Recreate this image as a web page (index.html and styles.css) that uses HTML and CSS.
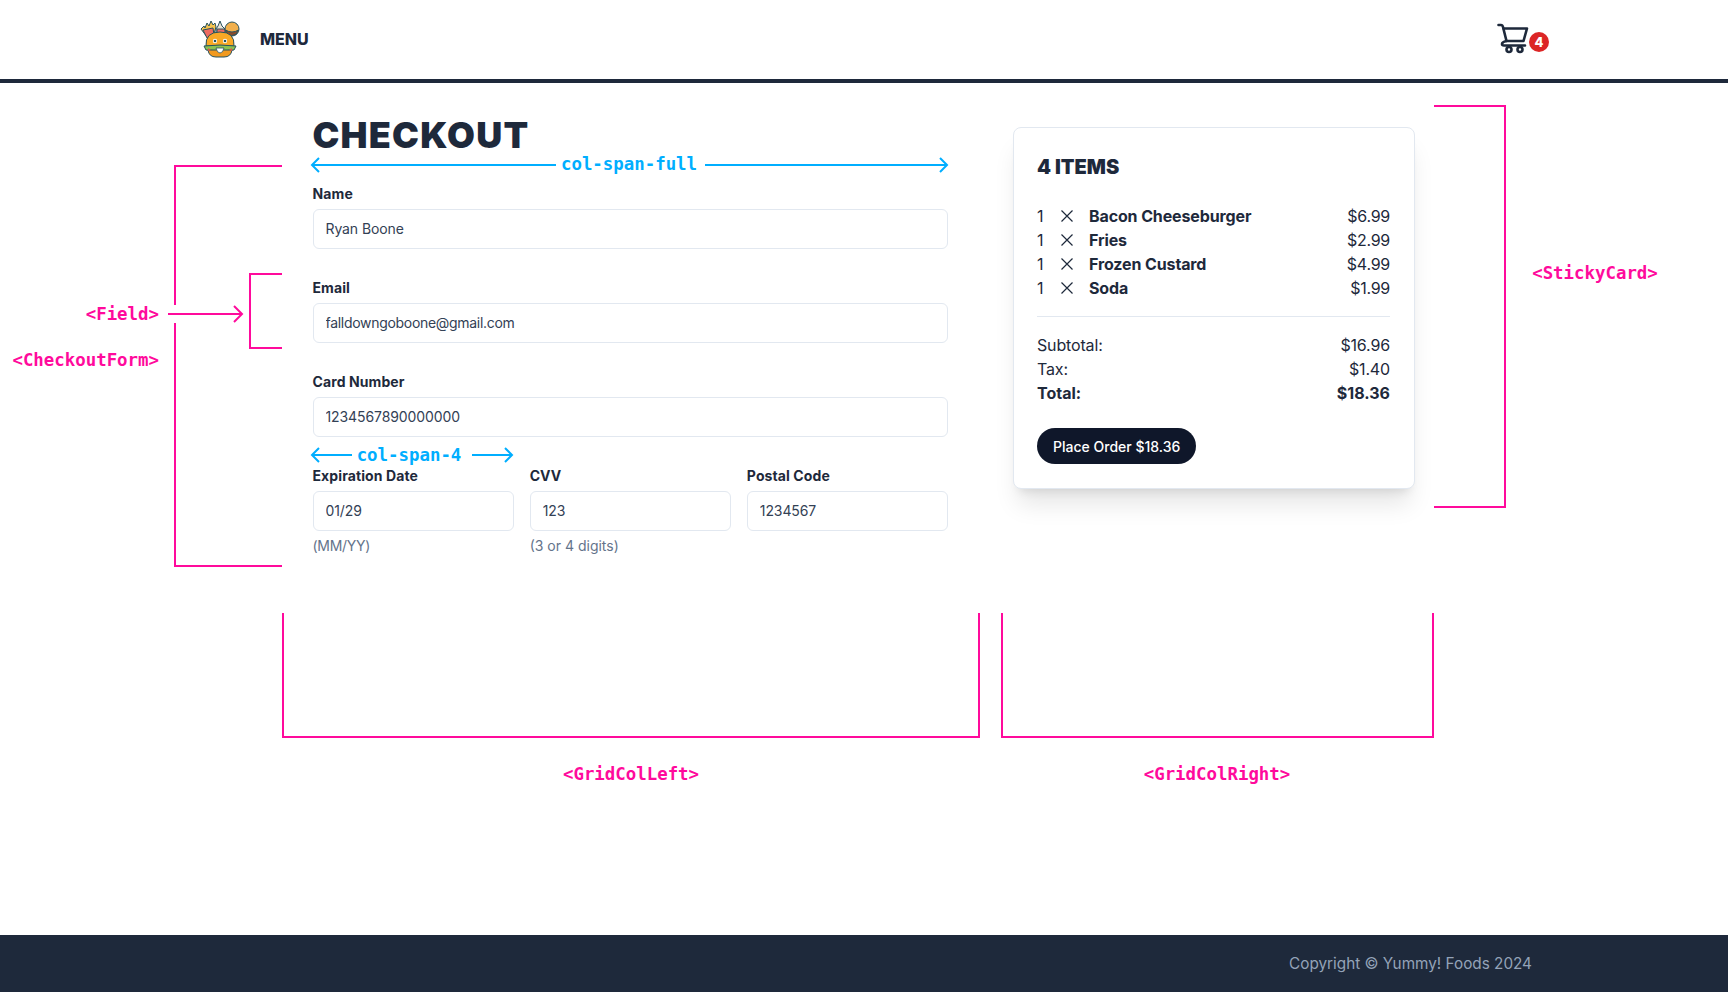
FILE: index.html
```html
<!DOCTYPE html>
<html>
    <head>
        <meta charset="utf-8">
        <title>Checkout</title>
        <link rel="stylesheet" href="styles.css">
    </head>
    <body>
        <header class="top">
            <div class="top-left">
                <svg class="logo" width="42" height="40" viewBox="0 0 42 40">
                    <g stroke="#27525e" stroke-width="1">
                        <path d="M2 10 L5 7 L6 9 L8 4 L10 7 L12 2 L14 6 L16 4 L17 8 L14 18 L8 18 Z" fill="#f6c34f"/>
                        <path d="M4 11 L14 9 L15 16 L8 19 Z" fill="#ef6b62"/>
                        <path d="M17 10 L19 7 L21 2 L23 7 L26 10 L26 16 L17 16 Z" fill="#ece4d6"/>
                        <path d="M18 10 H26 V16 H18 Z" fill="#ef6b62"/>
                        <circle cx="33" cy="10" r="7" fill="#f2b04c"/>
                        <path d="M26.500 11 Q33 15 39.500 11 L37 15.500 Q32 18 28 15 Z" fill="#8a4b2a"/>
                        <path d="M7 27 Q6 13 21 13 Q36 13 35 27 Z" fill="#f9a825"/>
                        <path d="M5 27 Q21 25 37 27 L35 31 Q21 33 7 31 Z" fill="#8cc152"/>
                        <path d="M9 31 H33 Q32 38 25 38 H17 Q10 38 9 31 Z" fill="#f29a1f"/>
                    </g>
                    <circle cx="16" cy="22" r="2.200" fill="#fff"/>
                    <circle cx="26" cy="22" r="2.200" fill="#fff"/>
                    <circle cx="16" cy="22" r="1.300" fill="#27525e"/>
                    <circle cx="26" cy="22" r="1.300" fill="#27525e"/>
                    <path d="M17 29 H25 Q24 34 21 34 Q18 34 17 29 Z" fill="#fff" stroke="#27525e" stroke-width="0.800"/>
                    <path d="M9 29 L12 31 L9 32 Z M33 29 L30 31 L33 32 Z" fill="#e2574c"/>
                </svg>
                <a class="menu-link">MENU</a>
            </div>
            <div class="cart">
                <svg width="32" height="32" viewBox="0 0 32 32" fill="none" stroke="#1e293b" stroke-width="2.600" stroke-linecap="round" stroke-linejoin="round">
                    <path d="M1.500 2 H4 Q5.500 2 6 4 L9.500 18"/>
                    <path d="M6.500 5.500 H30 L26.500 18 H9.500 Q5 19 5 21 Q5 22.500 7 22.500 H28"/>
                    <circle cx="12" cy="26.500" r="2.500"/>
                    <circle cx="23" cy="26.500" r="2.500"/>
                </svg>
                <span class="badge">4</span>
            </div>
        </header>

        <main class="page">
            <section class="left-col">
                <h1>CHECKOUT</h1>
                <form class="form">
                    <div class="field full">
                        <label>Name</label>
                        <input type="text" value="Ryan Boone">
                    </div>
                    <div class="field full">
                        <label>Email</label>
                        <input class="tight" type="text" value="falldowngoboone@gmail.com">
                    </div>
                    <div class="field full">
                        <label>Card Number</label>
                        <input type="text" value="1234567890000000">
                    </div>
                    <div class="field">
                        <label>Expiration Date</label>
                        <input type="text" value="01/29">
                        <small class="tight">(MM/YY)</small>
                    </div>
                    <div class="field">
                        <label>CVV</label>
                        <input type="text" value="123">
                        <small>(3 or 4 digits)</small>
                    </div>
                    <div class="field">
                        <label>Postal Code</label>
                        <input type="text" value="1234567">
                    </div>
                </form>
            </section>

            <aside class="card">
                <h2>4 ITEMS</h2>
                <ul class="items">
                    <li><span class="qty">1</span><span class="times"><svg width="12" height="12" viewBox="0 0 12 12"><path d="M0.500 0.500 L11.500 11.500 M11.500 0.500 L0.500 11.500"/></svg></span><b>Bacon Cheeseburger</b><span class="price">$6.99</span></li>
                    <li><span class="qty">1</span><span class="times"><svg width="12" height="12" viewBox="0 0 12 12"><path d="M0.500 0.500 L11.500 11.500 M11.500 0.500 L0.500 11.500"/></svg></span><b>Fries</b><span class="price">$2.99</span></li>
                    <li><span class="qty">1</span><span class="times"><svg width="12" height="12" viewBox="0 0 12 12"><path d="M0.500 0.500 L11.500 11.500 M11.500 0.500 L0.500 11.500"/></svg></span><b>Frozen Custard</b><span class="price">$4.99</span></li>
                    <li><span class="qty">1</span><span class="times"><svg width="12" height="12" viewBox="0 0 12 12"><path d="M0.500 0.500 L11.500 11.500 M11.500 0.500 L0.500 11.500"/></svg></span><b>Soda</b><span class="price">$1.99</span></li>
                </ul>
                <div class="totals">
                    <div class="row"><span>Subtotal:</span><span>$16.96</span></div>
                    <div class="row"><span>Tax:</span><span>$1.40</span></div>
                    <div class="row total"><span>Total:</span><span>$18.36</span></div>
                </div>
                <button class="order" type="button">Place Order $18.36</button>
            </aside>
        </main>

        <footer class="bottom">Copyright © Yummy! Foods 2024</footer>

        <!-- notes drawn over the page -->
        <svg class="notes" width="1728" height="992" viewBox="0 0 1728 992" fill="none">
            <g class="pink">
                <path d="M282 166 H175 V305 M175 323 V566 H282"/>
                <path d="M282 274 H250 V348 H282"/>
                <path d="M168 314 H242 M234 306 L242 314 L234 322"/>
                <path d="M1434 106 H1505 V507 H1434"/>
                <path d="M283 613 V737 H979 V613"/>
                <path d="M1002 613 V737 H1433 V613"/>
            </g>
            <g class="blue">
                <path d="M556 165 H312 M319 158 L312 165 L319 172"/>
                <path d="M705 165 H947 M940 158 L947 165 L940 172"/>
                <path d="M352 455 H312 M319 448 L312 455 L319 462"/>
                <path d="M472 455 H512 M505 448 L512 455 L505 462"/>
            </g>
            <text class="note note-pink" x="159" y="320" text-anchor="end">&lt;Field&gt;</text>
            <text class="note note-pink" x="159" y="366" text-anchor="end">&lt;CheckoutForm&gt;</text>
            <text class="note note-pink" x="1595" y="279" text-anchor="middle">&lt;StickyCard&gt;</text>
            <text class="note note-pink" x="631" y="780" text-anchor="middle">&lt;GridColLeft&gt;</text>
            <text class="note note-pink" x="1217" y="780" text-anchor="middle">&lt;GridColRight&gt;</text>
            <text class="note note-blue" x="629" y="170" text-anchor="middle">col-span-full</text>
            <text class="note note-blue" x="409" y="461" text-anchor="middle">col-span-4</text>
        </svg>
    </body>
</html>
```

FILE: styles.css
```css
* { box-sizing: border-box; }

body {
    margin: 0;
    min-height: 100vh;
    display: flex;
    flex-direction: column;
    font-family: Inter, "Liberation Sans", sans-serif;
    color: #1e293b;
    background: #fff;
    position: relative;
}

.top {
    height: 83px;
    border-bottom: 4px solid #1e293b;
    display: flex;
    align-items: center;
    justify-content: space-between;
    padding: 0 179px 2px 199px;
}
.top-left { display: flex; align-items: center; gap: 19px; }
.logo { display: block; }
.menu-link { font-size: 16px; font-weight: 800; }

.cart { display: flex; align-items: center; }
.cart svg { display: block; }
.badge {
    width: 20px;
    height: 20px;
    margin: 6px 0 0 0;
    border-radius: 50%;
    background: #dc2626;
    color: #fff;
    font-size: 13px;
    font-weight: 800;
    line-height: 20px;
    text-align: center;
}

.page {
    flex: 1;
    display: flex;
    align-items: flex-start;
    gap: 65px;
    padding: 32px 313px 0 312.500px;
}
.left-col { width: 635.500px; }

h1 {
    margin: 0;
    font-size: 36px;
    line-height: 40px;
    font-weight: 900;
    letter-spacing: 1.200px;
}

.form {
    display: grid;
    grid-template-columns: repeat(3, 1fr);
    column-gap: 16px;
    row-gap: 29.500px;
    margin-top: 29px;
}
.field { display: flex; flex-direction: column; }
.full { grid-column: 1 / -1; }
.field label {
    font-size: 14px;
    line-height: 20px;
    font-weight: 650;
    letter-spacing: 0.100px;
    margin-bottom: 5px;
}
.field input {
    height: 39.500px;
    width: 100%;
    padding: 0 12px;
    border: 1px solid #e2e8f0;
    border-radius: 6px;
    font-family: inherit;
    font-size: 14px;
    letter-spacing: -0.100px;
    color: #334155;
    background: #fff;
}
.field small {
    margin-top: 5px;
    font-size: 14px;
    line-height: 20px;
    color: #64748b;
}
.field .tight { letter-spacing: -0.300px; }

.card {
    width: 402px;
    margin-top: 12px;
    padding: 25px 24px 24px 23px;
    border: 1px solid #e2e8f0;
    border-radius: 8px;
    box-shadow: 0 20px 25px -5px rgba(0,0,0,0.1), 0 8px 10px -6px rgba(0,0,0,0.1);
    background: #fff;
}
h2 {
    margin: 0 0 23px;
    font-size: 20px;
    line-height: 28px;
    font-weight: 900;
}
.items {
    list-style: none;
    margin: 0;
    padding: 0 0 16px;
    border-bottom: 1px solid #e2e8f0;
    font-size: 16px;
    line-height: 24px;
}
.items li { display: flex; align-items: center; }
.qty { width: 23.500px; }
.times { width: 28.500px; display: flex; }
.times svg { stroke: #1e293b; stroke-width: 1.200; }
.items b { font-weight: 650; letter-spacing: -0.120px; }
.price { margin-left: auto; letter-spacing: -0.250px; }

.totals { padding-top: 16px; font-size: 16px; line-height: 24px; letter-spacing: -0.150px; }
.row { display: flex; justify-content: space-between; }
.total { font-weight: 700; letter-spacing: 0; }

.order {
    display: block;
    margin-top: 23px;
    height: 36px;
    padding: 0 16px;
    border: 0;
    border-radius: 18px;
    background: #0f172a;
    color: #fff;
    font-family: inherit;
    font-size: 14px;
    font-weight: 500;
}

.bottom {
    height: 57px;
    padding-right: 196px;
    background: #1e293b;
    color: #94a3b8;
    font-size: 15.300px;
    line-height: 58px;
    text-align: right;
}

.notes { position: absolute; left: 0; top: 0; pointer-events: none; }
.pink path { stroke: #ff0a9c; stroke-width: 2; }
.blue path { stroke: #00aeff; stroke-width: 2; }
.note { font-family: "DejaVu Sans Mono", monospace; font-size: 17.400px; font-weight: 700; }
.note-pink { fill: #ff0a9c; }
.note-blue { fill: #00aeff; }
```
